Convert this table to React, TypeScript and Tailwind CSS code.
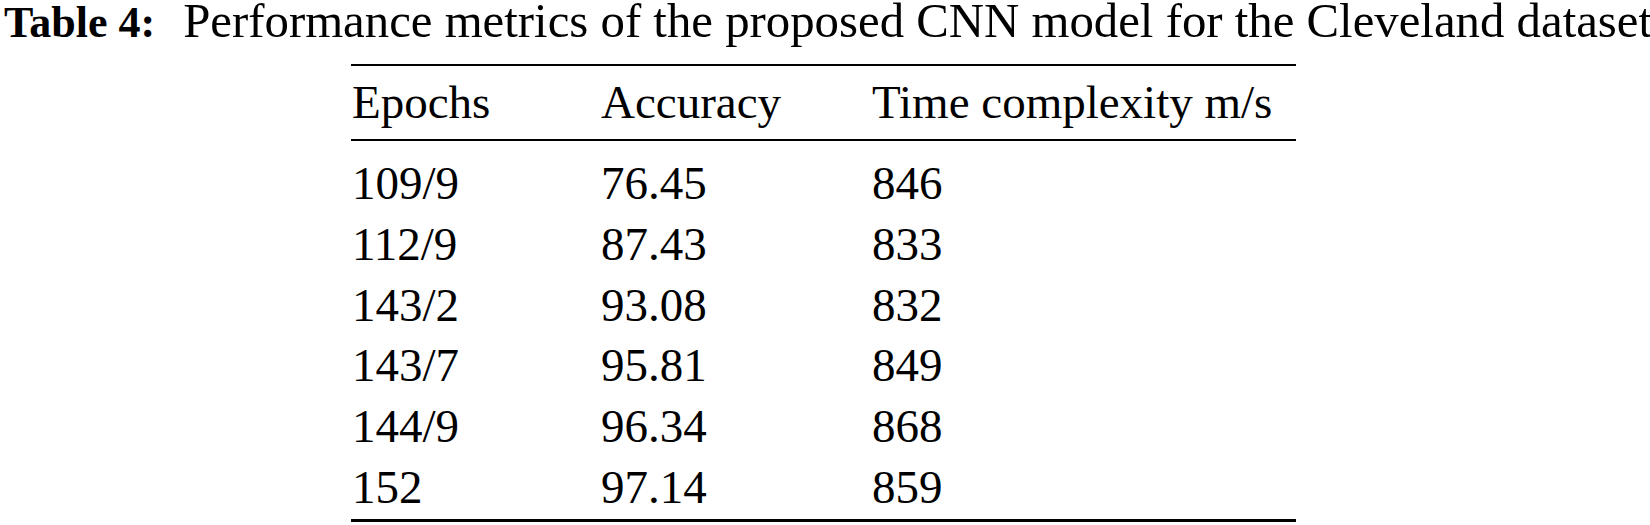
import React from "react";

const rows: [string, string, string][] = [
  ["109/9", "76.45", "846"],
  ["112/9", "87.43", "833"],
  ["143/2", "93.08", "832"],
  ["143/7", "95.81", "849"],
  ["144/9", "96.34", "868"],
  ["152", "97.14", "859"],
];

export default function App() {
  return (
    <div
      className="w-[1650px] h-[525px] bg-white text-black overflow-hidden flex flex-col"
      style={{ fontFamily: '"Liberation Serif", "Times New Roman", serif' }}
    >
      <div className="flex items-baseline h-[64px] pl-[4px] whitespace-nowrap">
        <span className="font-bold text-[44px] leading-[42px]">Table 4:</span>
        <span className="ml-[28px] text-[48.8px] leading-[42px]">
          Performance metrics of the proposed CNN model for the Cleveland dataset
        </span>
      </div>
      <div className="ml-[351px] w-[945px] text-[47px] whitespace-nowrap">
        <div className="border-t-2 border-b-2 border-black grid grid-cols-[250px_271px_424px] leading-[73px]">
          <div className="pl-[1px]">Epochs</div>
          <div>Accuracy</div>
          <div>Time complexity m/s</div>
        </div>
        <div className="pt-[12px] pb-[1px] border-b-[3px] border-black">
          {rows.map((r) => (
            <div
              key={r[0]}
              className="grid grid-cols-[250px_271px_424px] leading-[60.8px]"
            >
              <div className="pl-[1px]">{r[0]}</div>
              <div>{r[1]}</div>
              <div>{r[2]}</div>
            </div>
          ))}
        </div>
      </div>
    </div>
  );
}
